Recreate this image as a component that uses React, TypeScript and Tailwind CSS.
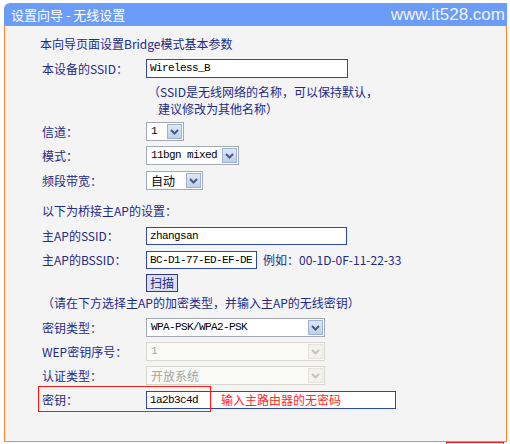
import React from "react";

const cjk = { fontFamily: '"Noto Sans CJK SC", "Liberation Sans", sans-serif' };
const mono = { fontFamily: '"Liberation Mono", "Courier New", monospace' };

function Chevron({ disabled }: { disabled?: boolean }) {
  return (
    <svg width="11" height="8" viewBox="0 0 11 8">
      <path
        d="M2 2 L5.5 5.5 L9 2"
        fill="none"
        stroke={disabled ? "#c4c4c4" : "#4a5a7a"}
        strokeWidth="2"
      />
    </svg>
  );
}

function Select({
  className,
  value,
  disabled,
  isMono,
}: {
  className: string;
  value: string;
  disabled?: boolean;
  isMono?: boolean;
}) {
  return (
    <div
      className={`${className} flex h-full items-stretch border ${
        disabled ? "border-[#d8d7cf] bg-[#f9f9f6]" : "border-[#a3a9b3] bg-white"
      }`}
    >
      <span
        className={`flex flex-1 items-center pl-[4px] ${
          disabled ? "text-[#a3a3a3]" : "text-black"
        } ${isMono ? "text-[11px] tracking-[-0.6px]" : "text-[12px]"}`}
        style={isMono ? mono : cjk}
      >
        {value}
      </span>
      <span
        className={`m-[1px] flex w-[15px] items-center justify-center border ${
          disabled
            ? "border-[#e4e3dc] bg-[#f3f2ec]"
            : "border-[#9fb4d4] bg-gradient-to-b from-[#dce8f8] to-[#bcd0ec]"
        }`}
      >
        <Chevron disabled={disabled} />
      </span>
    </div>
  );
}

function Input({ className, value }: { className: string; value: string }) {
  return (
    <div
      className={`${className} flex h-full items-center border border-[#2d48a8] bg-white pl-[3px] text-[11px] tracking-[-0.6px] text-black`}
      style={mono}
    >
      {value}
    </div>
  );
}

function Row({
  label,
  className,
  children,
}: {
  label?: string;
  className: string;
  children?: React.ReactNode;
}) {
  return (
    <div className={`${className} flex items-center`}>
      <div className="w-[104px] shrink-0 text-[12px]">{label}</div>
      {children}
    </div>
  );
}

export default function App() {
  return (
    <div className="relative h-[444px] w-[510px] overflow-hidden bg-white text-[#232a86]" style={cjk}>
      <div className="ml-[4px] w-[503px] pt-[3px]">
        {/* header */}
        <div className="flex h-[23px] items-center justify-between rounded-tl-[6px] bg-[#6b9cf8] pl-[7px] pr-[2px]">
          <span className="text-[13px] text-white">设置向导 - 无线设置</span>
          <span
            className="text-[17px] leading-none text-[#f2f2f2]"
            style={{ fontFamily: '"Liberation Sans", Arial, sans-serif' }}
          >
            www.it528.com
          </span>
        </div>

        {/* body */}
        <div className="h-[416px] border-x border-b border-[#f58a2a] bg-[#f4f4f4] pl-[37px]">
          <div className="ml-[-2px] flex h-[20px] items-center pt-[16px] text-[12px]">
            本向导页面设置Bridge模式基本参数
          </div>

          <Row label="本设备的SSID：" className="mt-[13px] h-[19px]">
            <Input className="w-[202px]" value="Wireless_B" />
          </Row>
          <div className="ml-[104px] mt-[5px] flex h-[17px] items-center pl-[2px] text-[12px]">
            （SSID是无线网络的名称，可以保持默认，
          </div>
          <div className="ml-[104px] flex h-[17px] items-center pl-[12px] text-[12px]">
            建议修改为其他名称）
          </div>

          <Row label="信道：" className="mt-[5px] h-[19px]">
            <Select className="w-[38px]" value="1" isMono />
          </Row>
          <Row label="模式：" className="mt-[5px] h-[19px]">
            <Select className="w-[93px]" value="11bgn mixed" isMono />
          </Row>
          <Row label="频段带宽：" className="mt-[6px] h-[19px]">
            <Select className="w-[57px]" value="自动" />
          </Row>

          <div className="mt-[12px] flex h-[18px] items-center text-[12px]">以下为桥接主AP的设置：</div>

          <Row label="主AP的SSID：" className="mt-[7px] h-[18px]">
            <Input className="w-[201px]" value="zhangsan" />
          </Row>
          <Row label="主AP的BSSID：" className="mt-[6px] h-[18px]">
            <Input className="w-[111px]" value="BC-D1-77-ED-EF-DE" />
            <span className="ml-[6px] text-[12px]">例如：00-1D-0F-11-22-33</span>
          </Row>
          <Row className="mt-[5px] h-[18px]">
            <div className="flex h-full w-[32px] items-center justify-center border border-[#2d3a8c] bg-[#dcdff2] text-[12px]">
              扫描
            </div>
          </Row>

          <div className="mt-[2px] flex h-[18px] items-center text-[12px]">
            （请在下方选择主AP的加密类型，并输入主AP的无线密钥）
          </div>

          <Row label="密钥类型：" className="mt-[6px] h-[19px]">
            <Select className="w-[179px]" value="WPA-PSK/WPA2-PSK" isMono />
          </Row>
          <Row label="WEP密钥序号：" className="mt-[5px] h-[19px]">
            <Select className="w-[179px]" value="1" disabled isMono />
          </Row>
          <Row label="认证类型：" className="mt-[5px] h-[19px]">
            <Select className="w-[179px]" value="开放系统" disabled />
          </Row>
          <Row label="密钥：" className="relative mt-[6px] h-[18px]">
            <div className="flex h-full w-[250px] items-center border border-[#2d48a8] bg-white">
              <span
                className="w-[64px] shrink-0 pl-[3px] text-[11px] tracking-[-0.6px] text-black"
                style={mono}
              >
                1a2b3c4d
              </span>
              <span className="ml-[10px] text-[12px] text-[#ff2a2a]">输入主路由器的无密码</span>
            </div>
            <div className="absolute left-[-4px] top-[-5px] h-[26px] w-[173px] border border-[#ff1a1a]" />
          </Row>
        </div>
      </div>
      <div className="absolute left-[446px] top-[442px] h-[10px] w-[58px] border border-[#ff1a1a]" />
    </div>
  );
}
